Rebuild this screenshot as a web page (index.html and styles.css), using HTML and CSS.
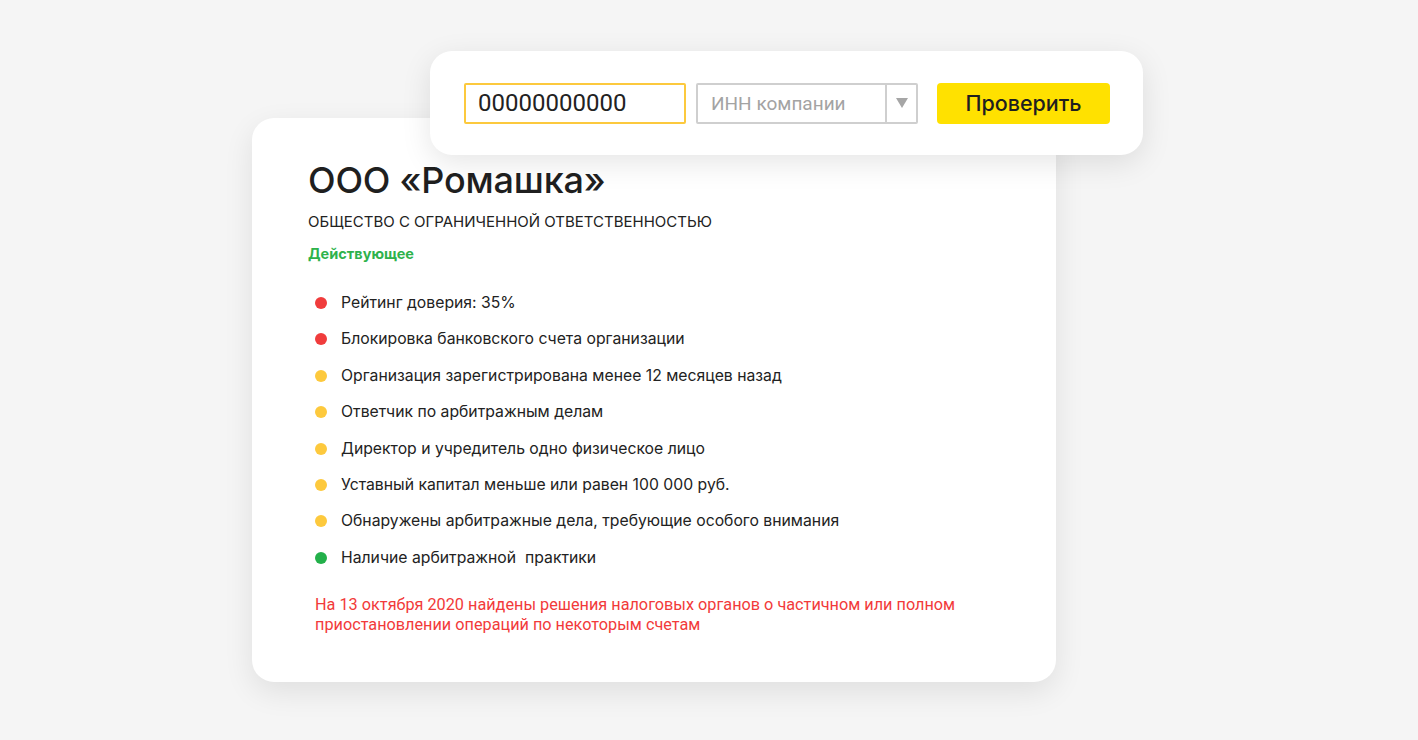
FILE: index.html
```html
<!DOCTYPE html>
<html lang="ru">
<head>
<meta charset="utf-8">
<title>Проверка компании</title>
<link rel="stylesheet" href="styles.css">
</head>
<body>
<div class="stage">
  <div class="search-card">
    <div class="field field-inn">00000000000</div>
    <div class="field field-select">
      <span class="placeholder">ИНН компании</span>
      <span class="arrow"><svg width="12" height="10" viewBox="0 0 12 10"><path d="M0 0 H12 L6 10 Z" fill="#a6a6a6"/></svg></span>
    </div>
    <button class="btn">Проверить</button>
  </div>

  <div class="card">
    <h1 class="title">ООО «Ромашка»</h1>
    <div class="subtitle">ОБЩЕСТВО С ОГРАНИЧЕННОЙ ОТВЕТСТВЕННОСТЬЮ</div>
    <div class="status">Действующее</div>
    <ul class="risks">
      <li><span class="dot red"></span>Рейтинг доверия: 35%</li>
      <li><span class="dot red"></span>Блокировка банковского счета организации</li>
      <li><span class="dot yellow"></span>Организация зарегистрирована менее 12 месяцев назад</li>
      <li><span class="dot yellow"></span>Ответчик по арбитражным делам</li>
      <li><span class="dot yellow"></span>Директор и учредитель одно физическое лицо</li>
      <li><span class="dot yellow"></span>Уставный капитал меньше или равен 100 000 руб.</li>
      <li><span class="dot yellow"></span>Обнаружены арбитражные дела, требующие особого внимания</li>
      <li><span class="dot green"></span>Наличие арбитражной &nbsp;практики</li>
    </ul>
    <p class="warning">На 13 октября 2020 найдены решения налоговых органов о частичном или полном приостановлении операций по некоторым счетам</p>
  </div>
</div>
</body>
</html>
```

FILE: styles.css
```css
* { box-sizing: border-box; }
html, body { margin: 0; padding: 0; }
body {
  background: #f5f5f5;
  width: 1418px;
  height: 740px;
  overflow: hidden;
  font-family: Inter, "Noto Sans", sans-serif;
  color: #222;
}
.stage {
  position: relative;
  width: 1418px;
  height: 740px;
  padding: 118px 0 0 252px;
}
.card {
  width: 804px;
  height: 564px;
  background: #fff;
  border-radius: 22px;
  box-shadow: 0 10px 30px rgba(0,0,0,0.09);
  padding: 40px 56px 0 56px;
}
.title {
  margin: 0;
  font-size: 36px;
  line-height: 44px;
  font-weight: 500;
  letter-spacing: -0.2px;
  color: #1f1f1f;
}
.subtitle {
  margin-top: 11px;
  font-size: 15px;
  line-height: 18px;
  color: #222;
}
.status {
  margin-top: 14px;
  font-size: 14.5px;
  line-height: 18px;
  font-weight: 700;
  color: #2eb24b;
}
.risks {
  list-style: none;
  margin: 29px 0 0 0;
  padding: 0 0 0 7px;
  display: flex;
  flex-direction: column;
  gap: 14.4px;
}
.risks li {
  display: flex;
  align-items: center;
  gap: 14px;
  font-size: 15.75px;
  line-height: 22px;
  color: #222;
}
.dot {
  width: 12px;
  height: 12px;
  border-radius: 50%;
  flex: none;
}
.dot.red { background: #f03c3c; }
.dot.yellow { background: #fdc93d; }
.dot.green { background: #23b04a; }
.warning {
  margin: 26px 0 0 7px;
  width: 670px;
  font-family: Roboto, "Liberation Sans", sans-serif;
  font-size: 16.25px;
  line-height: 20px;
  color: #f23a3a;
}
.search-card {
  position: absolute;
  left: 430px;
  top: 51px;
  width: 713px;
  height: 104px;
  background: #fff;
  border-radius: 22px;
  box-shadow: 0 8px 30px rgba(0,0,0,0.10);
  display: flex;
  align-items: center;
  padding: 0 33px 0 34px;
}
.field {
  height: 41px;
  width: 222px;
  display: flex;
  align-items: center;
  font-family: Roboto, "Liberation Sans", sans-serif;
}
.field-inn {
  border: 2px solid #fcc93e;
  border-radius: 2px;
  padding-left: 12px;
  font-size: 24px;
  color: #222;
}
.field-select {
  margin-left: 10px;
  border: 2px solid #cfcfcf;
  border-radius: 2px;
  padding-left: 13px;
  font-size: 19px;
  color: #a3a3a3;
}
.placeholder { flex: 1; }
.arrow {
  width: 31px;
  height: 100%;
  border-left: 2px solid #cfcfcf;
  display: flex;
  align-items: center;
  justify-content: center;
}
.btn {
  margin-left: 19px;
  width: 173px;
  height: 41px;
  border: 0;
  border-radius: 4px;
  background: #ffe100;
  font-family: Inter, "Noto Sans", sans-serif;
  font-size: 21.5px;
  font-weight: 500;
  color: #1f1f1f;
  cursor: pointer;
}
```
